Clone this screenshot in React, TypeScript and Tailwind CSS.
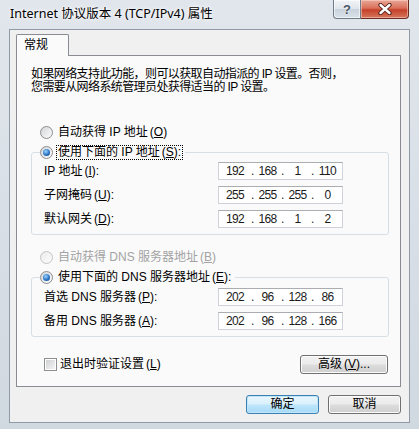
import type { ReactNode } from 'react'

const cjk = "font-['Liberation_Sans','Noto_Sans_CJK_SC',sans-serif]"

function Radio({ checked, disabled }: { checked?: boolean; disabled?: boolean }) {
  return (
    <span
      className={`flex h-[13px] w-[13px] shrink-0 items-center justify-center rounded-full border ${
        disabled
          ? 'border-[#c4c4c4] bg-[linear-gradient(135deg,#ececec,#fbfbfb)]'
          : 'border-[#8b8d90] bg-[linear-gradient(135deg,#d3d5d8,#fdfdfd)]'
      }`}
    >
      {checked && (
        <span className="h-[7px] w-[7px] rounded-full bg-[radial-gradient(circle_at_40%_35%,#9ad6ff,#2a74c4_55%,#123f7a)]" />
      )}
    </span>
  )
}

function RadioRow({ checked, disabled, focus, children }: { checked?: boolean; disabled?: boolean; focus?: boolean; children: ReactNode }) {
  return (
    <div className="flex h-[15px] items-center gap-[3px]">
      <Radio checked={checked} disabled={disabled} />
      <span
        className={`whitespace-nowrap px-[1px] leading-[13px] ${disabled ? 'text-[#a3a3a3]' : 'text-black'} ${
          focus ? 'border border-dotted border-black' : 'border border-transparent'
        }`}
      >
        {children}
      </span>
    </div>
  )
}

// accelerator key, with the small gap SimSun leaves before "("
function Key({ k, tail = '' }: { k: string; tail?: string }) {
  return (
    <span className="ml-[2px]">
      (<u>{k}</u>){tail}
    </span>
  )
}

function IpBox({ parts }: { parts: string[] }) {
  return (
    <div className="flex h-[18px] w-[125px] items-center border border-[#cfd2d8] border-t-[#abadb3] bg-white font-['Liberation_Sans',sans-serif] text-[12px] leading-[16px] tracking-[-0.6px] text-[#1a1a1a]">
      {parts.map((p, i) => (
        <div key={i} className={`flex ${i === 0 ? 'w-[32px]' : 'w-[30px]'}`}>
          {i > 0 && <span className="w-[3px]">.</span>}
          <span className="flex-1 text-center">{p}</span>
        </div>
      ))}
    </div>
  )
}

function Field({ label, parts }: { label: ReactNode; parts: string[] }) {
  return (
    <div className="flex h-[18px] items-center">
      <span className="w-[174px] whitespace-nowrap leading-[13px]">{label}</span>
      <IpBox parts={parts} />
    </div>
  )
}

function Group({ legend, children, pt }: { legend: ReactNode; children: ReactNode; pt: string }) {
  return (
    <div className={`relative ml-[14px] mr-[11px] flex flex-col gap-[6px] rounded-[3px] border border-[#d5dfe5] pb-[6px] pl-[12px] ${pt}`}>
      <div className="absolute -top-[8px] left-[8px] bg-[#fafafa] pr-[2px]">{legend}</div>
      {children}
    </div>
  )
}

function Button({ children, primary, className = '' }: { children: ReactNode; primary?: boolean; className?: string }) {
  return (
    <div
      className={`flex h-[19px] items-center justify-center rounded-[3px] border leading-[13px] text-black ${
        primary
          ? 'border-[#3c7fb1] bg-[linear-gradient(180deg,#eaf6fd_0%,#d9f0fc_48%,#bee6fd_52%,#a7d9f5_100%)] shadow-[inset_0_0_0_1px_#bfe6fb]'
          : 'border-[#707070] bg-[linear-gradient(180deg,#f2f2f2_0%,#ebebeb_48%,#dddddd_52%,#cfcfcf_100%)] shadow-[inset_0_0_0_1px_#fcfcfc]'
      } ${className}`}
    >
      {children}
    </div>
  )
}

export default function App() {
  return (
    <div className={`flex h-[429px] w-[419px] flex-col overflow-hidden bg-[linear-gradient(180deg,#e1e6ec,#d0d8e0)] text-[12px] ${cjk}`}>
      {/* Title bar */}
      <div className="flex h-[29px] shrink-0">
        <div className="pl-[10px] pt-[6px] font-['Noto_Sans','Noto_Sans_CJK_SC',sans-serif] text-[12.5px] leading-[16px] text-black [text-shadow:0_0_6px_#ffffff,0_0_3px_#ffffff]">
          Internet 协议版本 4 (TCP/IPv4) 属性
        </div>
        <div className="ml-auto mr-[10px] flex h-[19px]">
          <div className="flex w-[28px] items-center justify-center rounded-bl-[4px] border border-t-0 border-[#6e7b89] bg-[linear-gradient(180deg,#f1f4f7_0%,#dfe5eb_50%,#c9d2dc_51%,#d9e1e9_100%)] shadow-[inset_0_0_0_1px_rgba(255,255,255,0.6)]">
            <span className="font-['Liberation_Sans',sans-serif] text-[13px] font-bold leading-none text-[#4a5563] [text-shadow:0_0_2px_#ffffff]">?</span>
          </div>
          <div className="flex w-[48px] items-center justify-center rounded-br-[4px] border border-l-0 border-t-0 border-[#6b2a20] bg-[linear-gradient(180deg,#e9a898_0%,#d9705a_45%,#c5412a_55%,#d5765b_100%)] shadow-[inset_0_0_0_1px_rgba(255,220,210,0.5)]">
            <svg width="16" height="12" viewBox="0 0 16 12">
              <path d="M3.5 2 L12.5 10 M12.5 2 L3.5 10" stroke="#4a1a12" strokeWidth="4.2" strokeLinecap="round" />
              <path d="M3.5 2 L12.5 10 M12.5 2 L3.5 10" stroke="#ffffff" strokeWidth="2.4" strokeLinecap="round" />
            </svg>
          </div>
        </div>
      </div>

      {/* Client area */}
      <div className="mx-[9px] flex h-[394px] shrink-0 flex-col border border-[#8f9aa6] bg-[#f0f0f0] pb-[8px] pl-[6px] pr-[8px] pt-[4px]">
        <div className="relative z-10 flex h-[22px] w-[53px] items-center rounded-t-[2px] border border-b-0 border-[#898c95] bg-[#fafafa] pl-[7px] leading-[13px]">
          常规
        </div>
        <div className="-mt-[1px] flex h-[332px] flex-col border border-[#898c95] bg-[#fafafa]">
          <p className="ml-[14px] mt-[12px] whitespace-nowrap leading-[13px] tracking-[-0.6px]">
            如果网络支持此功能，则可以获取自动指派的 IP 设置。否则，
            <br />
            您需要从网络系统管理员处获得适当的 IP 设置。
          </p>

          <div className="ml-[23px] mt-[31px]">
            <RadioRow>
              自动获得 IP 地址<Key k="O" />
            </RadioRow>
          </div>

          <div className="mt-[12px]">
            <Group
              pt="pt-[9px]"
              legend={
                <RadioRow checked focus>
                  使用下面的 IP 地址<Key k="S" tail=":" />
                </RadioRow>
              }
            >
              <Field label={<>IP 地址<Key k="I" tail=":" /></>} parts={['192', '168', '1', '110']} />
              <Field label={<>子网掩码<Key k="U" tail=":" /></>} parts={['255', '255', '255', '0']} />
              <Field label={<>默认网关<Key k="D" tail=":" /></>} parts={['192', '168', '1', '2']} />
            </Group>
          </div>

          <div className="ml-[23px] mt-[15px]">
            <RadioRow disabled>
              自动获得 DNS 服务器地址<Key k="B" />
            </RadioRow>
          </div>

          <div className="mt-[12px]">
            <Group
              pt="pt-[10px]"
              legend={
                <RadioRow checked>
                  使用下面的 DNS 服务器地址<Key k="E" tail=":" />
                </RadioRow>
              }
            >
              <Field label={<>首选 DNS 服务器<Key k="P" tail=":" /></>} parts={['202', '96', '128', '86']} />
              <Field label={<>备用 DNS 服务器<Key k="A" tail=":" /></>} parts={['202', '96', '128', '166']} />
            </Group>
          </div>

          <div className="ml-[27px] mr-[12px] mt-[18px] flex h-[18px] items-center">
            <span className="flex h-[13px] w-[13px] items-center justify-center border border-[#8e8f8f] bg-white">
              <span className="h-[9px] w-[9px] bg-[linear-gradient(135deg,#cfd1d3,#f4f4f4)]" />
            </span>
            <span className="ml-[3px] leading-[13px]">
              退出时验证设置<Key k="L" />
            </span>
            <Button className="ml-auto h-[18px] w-[88px]">
              高级<Key k="V" tail="..." />
            </Button>
          </div>
        </div>

        <div className="mt-[8px] flex justify-end gap-[9px]">
          <Button primary className="w-[73px]">
            确定
          </Button>
          <Button className="w-[73px]">取消</Button>
        </div>
      </div>
    </div>
  )
}
